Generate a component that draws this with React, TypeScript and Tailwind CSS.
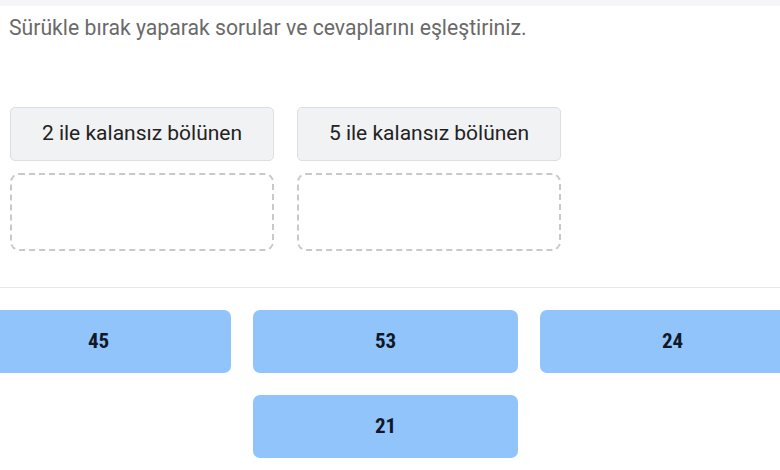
import React from "react";

const Answer = ({ v }: { v: string }) => (
  <div className="flex h-[63px] w-[265px] shrink-0 items-center justify-center rounded-[7px] bg-[#90c4fa] text-[21px] font-bold text-[#111827] [font-family:'Liberation_Sans_Narrow','Roboto_Condensed',Roboto,sans-serif]">
    {v}
  </div>
);

export default function App() {
  return (
    <div className="min-h-[470px] w-[780px] overflow-hidden bg-white [font-family:Roboto,'Noto_Sans',sans-serif]">
      <div className="h-[6px] bg-[#f6f6fa]" />
      <p className="pl-[9px] pt-[9px] text-[21.2px] leading-[26px] text-[#6a6a6a]">
        Sürükle bırak yaparak sorular ve cevaplarını eşleştiriniz.
      </p>
      <div className="mt-[66px] flex gap-[23px] pl-[10px]">
        {["2 ile kalansız bölünen", "5 ile kalansız bölünen"].map((t) => (
          <div key={t} className="flex w-[264px] flex-col gap-[12px]">
            <div className="flex h-[54px] items-center justify-center rounded-[5px] border border-[#dcdee2] bg-[#f1f2f4] text-[21px] text-[#222]">
              {t}
            </div>
            <div className="h-[78px] rounded-[9px] border-2 border-dashed border-[#c9c9c9]" />
          </div>
        ))}
      </div>
      <div className="mt-[36px] h-px bg-[#e6e6e6]" />
      <div className="mt-[22px] flex flex-col gap-[22px] pr-[9px]">
        <div className="flex justify-center gap-[22px]">
          <Answer v="45" />
          <Answer v="53" />
          <Answer v="24" />
        </div>
        <div className="flex justify-center">
          <Answer v="21" />
        </div>
      </div>
    </div>
  );
}
